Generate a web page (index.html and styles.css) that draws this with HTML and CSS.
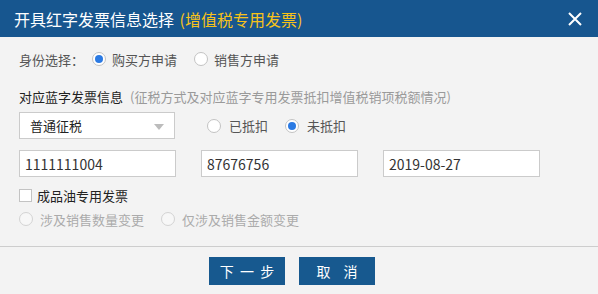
FILE: index.html
```html
<!DOCTYPE html>
<html lang="zh">
<head>
<meta charset="utf-8">
<title>开具红字发票信息选择</title>
<link rel="stylesheet" href="styles.css">
</head>
<body>
<div class="dialog">
  <div class="header">
    <div class="title">开具红字发票信息选择 <span class="sub">(增值税专用发票)</span></div>
    <div class="close">
      <svg width="14" height="14" viewBox="0 0 14 14"><path d="M1 1L13 13M13 1L1 13" stroke="#fff" stroke-width="2" fill="none"/></svg>
    </div>
  </div>
  <div class="content">
    <div class="row row-id">
      <span class="label">身份选择：</span>
      <label class="opt opt-first"><span class="radio checked"></span><span>购买方申请</span></label>
      <label class="opt opt-second"><span class="radio"></span><span>销售方申请</span></label>
    </div>
    <div class="row row-info">
      <span class="strong">对应蓝字发票信息</span>
      <span class="hint">(征税方式及对应蓝字专用发票抵扣增值税销项税额情况)</span>
    </div>
    <div class="row row-select">
      <div class="select"><span>普通征税</span><span class="arrow"></span></div>
      <label class="opt opt-deduct"><span class="radio"></span><span>已抵扣</span></label>
      <label class="opt opt-undeduct"><span class="radio checked"></span><span>未抵扣</span></label>
    </div>
    <div class="row row-inputs">
      <div class="input">1111111004</div>
      <div class="input">87676756</div>
      <div class="input">2019-08-27</div>
    </div>
    <div class="row row-check">
      <span class="checkbox"></span><span class="strong">成品油专用发票</span>
    </div>
    <div class="row row-disabled">
      <label class="opt dis opt-qty"><span class="radio disabled"></span><span>涉及销售数量变更</span></label>
      <label class="opt dis"><span class="radio disabled"></span><span>仅涉及销售金额变更</span></label>
    </div>
  </div>
  <div class="footer">
    <button class="btn btn-next">下 一 步</button>
    <button class="btn btn-cancel">取 消</button>
  </div>
</div>
</body>
</html>
```
FILE: styles.css
```css
* { box-sizing: border-box; }
html, body { margin: 0; padding: 0; }
body {
  width: 598px;
  height: 294px;
  background: #f3f3f3;
  font-family: "Noto Sans CJK SC", "Noto Sans", sans-serif;
  font-size: 13px;
  color: #555;
  overflow: hidden;
}
.dialog { width: 598px; height: 294px; background: #f3f3f3; }
.header {
  height: 37px;
  background: #17568f;
  display: flex;
  align-items: center;
  justify-content: space-between;
  padding: 0 16px 0 14px;
}
.title { color: #fff; font-size: 16px; line-height: 20px; white-space: nowrap; }
.sub { color: #f7c21a; margin-left: 2px; }
.close { width: 14px; height: 14px; display: flex; }
.content { padding: 0 19px; }
.row { display: flex; align-items: center; white-space: nowrap; }
.row-id { margin-top: 12px; height: 20px; }
.label { color: #555; margin-right: 8px; }
.opt { display: flex; align-items: center; color: #555; }
.opt .radio { margin-right: 6px; }
.opt-second { margin-left: 17px; }
.radio {
  width: 14px; height: 14px;
  border: 1px solid #c3c3c3;
  border-radius: 50%;
  background: #fff;
  display: inline-flex;
  align-items: center;
  justify-content: center;
  flex: none;
}
.radio.checked::after {
  content: "";
  width: 8px; height: 8px;
  border-radius: 50%;
  background: #2b7ae3;
}
.radio.disabled { border-color: #d3d3d3; background: #f7f7f7; }
.row-info { margin-top: 17px; height: 20px; }
.strong { color: #222; }
.hint { color: #9a9a9a; margin-left: 7px; }
.row-select { margin-top: 6px; height: 27px; }
.select {
  width: 156px; height: 27px;
  background: #fff;
  border: 1px solid #cbcbcb;
  display: flex;
  align-items: center;
  justify-content: space-between;
  padding: 0 10px 0 10px;
  color: #222;
}
.arrow {
  width: 0; height: 0;
  border-left: 5px solid transparent;
  border-right: 5px solid transparent;
  border-top: 6px solid #bcbcbc;
  margin-top: 2px;
}
.opt-deduct { margin-left: 32px; }
.opt-deduct .radio, .opt-undeduct .radio { margin-right: 8px; }
.opt-undeduct { margin-left: 17px; }
.row-inputs { margin-top: 11px; height: 27px; gap: 25px; }
.input {
  width: 157px; height: 27px;
  background: #fff;
  border: 1px solid #cbcbcb;
  padding: 0 5px;
  display: flex;
  align-items: center;
  color: #333;
  font-size: 14px;
}
.row-check { margin-top: 10px; height: 16px; }
.checkbox {
  width: 13px; height: 13px;
  border: 1px solid #c3c3c3;
  background: #fff;
  margin-right: 5px;
}
.row-disabled { margin-top: 8px; height: 16px; }
.dis { color: #ababab; }
.dis .radio { margin-right: 7px; }
.opt-qty { margin-right: 17px; }
.footer {
  margin-top: 19px;
  border-top: 1px solid #cdcdcd;
  padding-top: 10px;
  display: flex;
  justify-content: center;
  gap: 14px;
  padding-right: 14px;
}
.btn {
  width: 76px; height: 28px;
  background: #17598f;
  color: #fff;
  border: none;
  font-family: "Noto Sans CJK SC", sans-serif;
  font-size: 14px;
  padding: 0;
  white-space: pre;
}
.btn-next { word-spacing: 3px; }
.btn-cancel { word-spacing: 10px; }
```
